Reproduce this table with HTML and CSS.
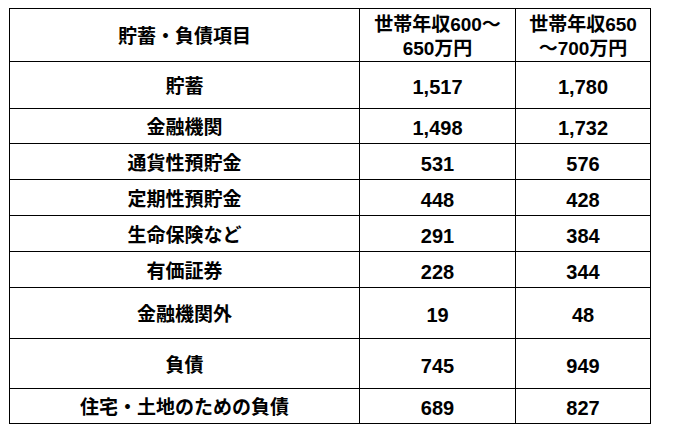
FILE: index.html
```html
<!DOCTYPE html>
<html lang="ja">
<head>
<meta charset="utf-8">
<link rel="stylesheet" href="styles.css">
</head>
<body>
<table class="data">
  <colgroup>
    <col class="c-item">
    <col class="c-a">
    <col class="c-b">
  </colgroup>
  <tr class="r-head">
    <td>貯蓄・負債項目</td>
    <td class="head2">世帯年収600～<br>650万円</td>
    <td class="head2">世帯年収650<br>～700万円</td>
  </tr>
  <tr class="r-47">
    <td>貯蓄</td><td class="num">1,517</td><td class="num">1,780</td>
  </tr>
  <tr class="r-35">
    <td>金融機関</td><td class="num">1,498</td><td class="num">1,732</td>
  </tr>
  <tr class="r-36">
    <td>通貨性預貯金</td><td class="num">531</td><td class="num">576</td>
  </tr>
  <tr class="r-36">
    <td>定期性預貯金</td><td class="num">448</td><td class="num">428</td>
  </tr>
  <tr class="r-36">
    <td>生命保険など</td><td class="num">291</td><td class="num">384</td>
  </tr>
  <tr class="r-36">
    <td>有価証券</td><td class="num">228</td><td class="num">344</td>
  </tr>
  <tr class="r-51">
    <td>金融機関外</td><td class="num">19</td><td class="num">48</td>
  </tr>
  <tr class="r-50">
    <td>負債</td><td class="num">745</td><td class="num">949</td>
  </tr>
  <tr class="r-35">
    <td>住宅・土地のための負債</td><td class="num">689</td><td class="num">827</td>
  </tr>
</table>
</body>
</html>
```
FILE: styles.css
```css
html, body {
  margin: 0;
  padding: 0;
  background: #fff;
}
body {
  padding: 8px 0 0 9px;
  font-family: "Liberation Sans", "Noto Sans CJK JP", sans-serif;
  color: #000;
}
.data {
  border-collapse: collapse;
  table-layout: fixed;
  width: 641px;
}
.c-item { width: 350px; }
.c-a { width: 156px; }
.c-b { width: 135px; }
.data td {
  border: 1px solid #000;
  text-align: center;
  vertical-align: middle;
  font-weight: bold;
  font-size: 19px;
  line-height: 22px;
  padding: 4px 0 0 0;
  box-sizing: border-box;
}
.data td.num {
  font-size: 20px;
}
.data td.head2 {
  line-height: 24px;
}
.r-head td { height: 52px; }
.r-47 td { height: 47px; }
.r-35 td { height: 35px; }
.r-36 td { height: 36px; }
.r-51 td { height: 51px; }
.r-50 td { height: 50px; }
```
